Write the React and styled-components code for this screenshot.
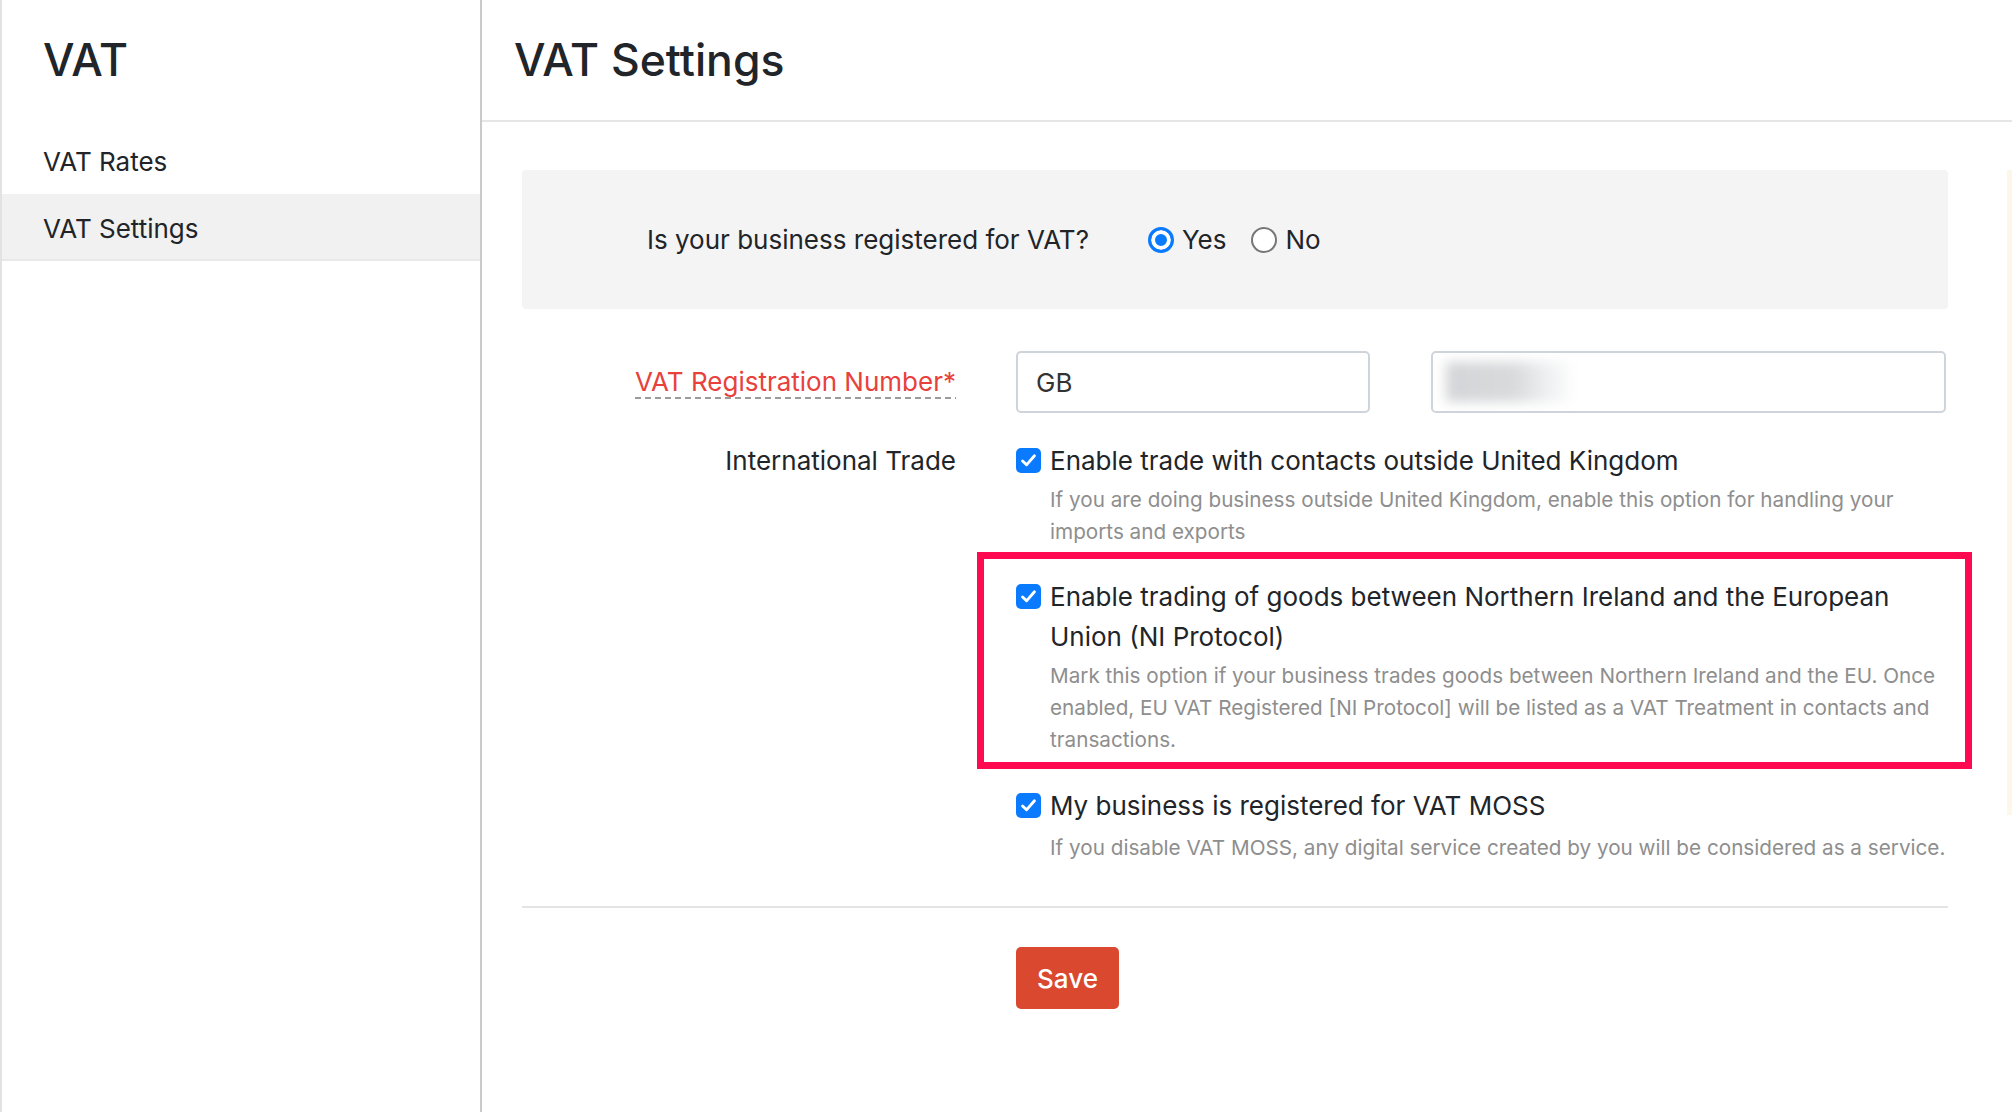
import styled, { createGlobalStyle } from 'styled-components'

const GlobalStyle = createGlobalStyle`
  body {
    margin: 0;
    font-family: Inter, "Liberation Sans", sans-serif;
    color: #212529;
    background: #fff;
  }
  * { box-sizing: border-box; }
`

const Page = styled.div`
  display: flex;
  height: 100vh;
  border-left: 2px solid #e2e2e2;
`

const Sidebar = styled.aside`
  width: 480px;
  flex-shrink: 0;
  border-right: 2px solid #cacaca;
`

const SideTitle = styled.h2`
  margin: 0;
  height: 127px;
  padding: 38px 0 0 41px;
  font-size: 44.5px;
  line-height: 1;
  font-weight: 500;
`

const NavItem = styled.div`
  height: 67px;
  display: flex;
  align-items: center;
  padding: 3px 0 0 41px;
  font-size: 26px;
  background: ${p => (p.$active ? '#f1f1f1' : 'transparent')};
  border-bottom: 2px solid ${p => (p.$active ? '#e8e8e8' : 'transparent')};
`

const Main = styled.main`
  flex: 1;
  display: flex;
  flex-direction: column;
`

const Header = styled.header`
  height: 122px;
  border-bottom: 2px solid #e6e6e6;
  padding-left: 32px;
  display: flex;
  align-items: center;
`

const Title = styled.h1`
  margin: 0;
  font-size: 44.5px;
  line-height: 1;
  font-weight: 500;
`

const Body = styled.div`
  flex: 1;
  display: flex;
`

const Form = styled.form`
  flex: 1;
  padding: 48px 59px 0 40px;
`

const Strip = styled.div`
  width: 5px;
  height: 645px;
  margin-top: 48px;
  background: #fcf7e9;
`

const QuestionBox = styled.div`
  height: 139px;
  background: #f4f4f4;
  border-radius: 4px;
  display: flex;
  align-items: center;
  padding-left: 125px;
  font-size: 26px;
`

const Question = styled.span`
  margin-right: 59px;
`

const RadioOption = styled.label`
  display: inline-flex;
  align-items: center;
  gap: 8px;
  margin-right: 25px;
`

const Radio = styled.input`
  appearance: none;
  margin: 0;
  width: 26px;
  height: 26px;
  border-radius: 50%;
  border: 2px solid #767676;
  background: #fff;

  &:checked {
    border: 3px solid #0a7aff;
    background: #0a7aff;
    box-shadow: inset 0 0 0 4px #fff;
  }
`

const FieldRow = styled.div`
  display: grid;
  grid-template-columns: 434px 1fr;
  column-gap: 60px;
  align-items: ${p => p.$align || 'start'};
  margin-top: ${p => p.$top || 0}px;
`

const FieldLabel = styled.div`
  text-align: right;
  font-size: 26px;
  line-height: 40px;
`

const Required = styled.span`
  color: #e8413c;
  background: repeating-linear-gradient(to right, #9b9b9b 0 6px, transparent 6px 10px) left bottom / 100% 2px no-repeat;
  padding-bottom: 2px;
`

const Controls = styled.div`
  display: flex;
  gap: 61px;
  margin-right: 2px;
`

const TextInput = styled.input`
  width: 354px;
  height: 62px;
  border: 2px solid #cfd4da;
  border-radius: 5px;
  padding: 0 18px;
  font: inherit;
  font-size: 26px;
  color: #333;
`

const RedactedField = styled.div`
  flex: 1;
  height: 62px;
  border: 2px solid #cfd4da;
  border-radius: 5px;
  display: flex;
  align-items: center;
  padding-left: 13px;
  overflow: hidden;
`

const Blur = styled.span`
  width: 125px;
  height: 40px;
  background: linear-gradient(90deg, #d4d5d8 0%, #d9dadc 55%, #eeeff1 80%, #fbfbfb 100%);
  filter: blur(6px);
`

const CheckRow = styled.label`
  display: flex;
  align-items: flex-start;
  gap: 9px;
  font-size: 26px;
  line-height: 40px;
`

const CheckBox = styled.span`
  flex: 0 0 25px;
  height: 25px;
  margin-top: 7px;
  border-radius: 5px;
  background: #0a7aff;
  display: flex;
  align-items: center;
  justify-content: center;
`

const Help = styled.p`
  margin: ${p => p.$top || 3}px 0 0 34px;
  font-size: 20.7px;
  line-height: 32px;
  color: #8e8e8e;
`

const Highlight = styled.div`
  margin: 4px -24px 0 -39px;
  border: 7px solid #ff0a50;
  padding: 18px 17px 6px 32px;
`

const Item = styled.div`
  margin-top: ${p => p.$top || 0}px;
`

const Divider = styled.hr`
  margin: 42px 0 0;
  border: 0;
  height: 2px;
  background: #e4e4e4;
`

const SaveButton = styled.button`
  margin: 39px 0 0 494px;
  width: 103px;
  height: 62px;
  border: 0;
  border-radius: 5px;
  background: #d9482f;
  color: #fff;
  font: inherit;
  font-size: 26px;
  font-weight: 500;
`

function Check() {
  return (
    <CheckBox>
      <svg width="19" height="19" viewBox="0 0 24 24" fill="none">
        <path d="M4.5 12.5l5 5L19.5 6" stroke="#fff" strokeWidth="3.6" strokeLinecap="round" strokeLinejoin="round" />
      </svg>
    </CheckBox>
  )
}

function CheckOption({ label, help, helpTop }) {
  return (
    <>
      <CheckRow>
        <Check />
        <span>{label}</span>
      </CheckRow>
      <Help $top={helpTop}>{help}</Help>
    </>
  )
}

export default function App() {
  return (
    <>
      <GlobalStyle />
      <Page>
        <Sidebar>
          <SideTitle>VAT</SideTitle>
          <NavItem>VAT Rates</NavItem>
          <NavItem $active>VAT Settings</NavItem>
        </Sidebar>
        <Main>
          <Header>
            <Title>VAT Settings</Title>
          </Header>
          <Body>
            <Form onSubmit={e => e.preventDefault()}>
              <QuestionBox>
                <Question>Is your business registered for VAT?</Question>
                <RadioOption>
                  <Radio type="radio" name="registered" defaultChecked />
                  Yes
                </RadioOption>
                <RadioOption>
                  <Radio type="radio" name="registered" />
                  No
                </RadioOption>
              </QuestionBox>

              <FieldRow $align="center" $top={42}>
                <FieldLabel>
                  <Required>VAT Registration Number*</Required>
                </FieldLabel>
                <Controls>
                  <TextInput defaultValue="GB" />
                  <RedactedField>
                    <Blur />
                  </RedactedField>
                </Controls>
              </FieldRow>

              <FieldRow $top={28}>
                <FieldLabel>International Trade</FieldLabel>
                <div>
                  <CheckOption
                    label="Enable trade with contacts outside United Kingdom"
                    help="If you are doing business outside United Kingdom, enable this option for handling your imports and exports"
                  />
                  <Highlight>
                    <CheckOption
                      label="Enable trading of goods between Northern Ireland and the European Union (NI Protocol)"
                      help="Mark this option if your business trades goods between Northern Ireland and the EU. Once enabled, EU VAT Registered [NI Protocol] will be listed as a VAT Treatment in contacts and transactions."
                    />
                  </Highlight>
                  <Item $top={17}>
                    <CheckOption
                      label="My business is registered for VAT MOSS"
                      help="If you disable VAT MOSS, any digital service created by you will be considered as a service."
                      helpTop={6}
                    />
                  </Item>
                </div>
              </FieldRow>

              <Divider />
              <SaveButton type="submit">Save</SaveButton>
            </Form>
            <Strip />
          </Body>
        </Main>
      </Page>
    </>
  )
}
